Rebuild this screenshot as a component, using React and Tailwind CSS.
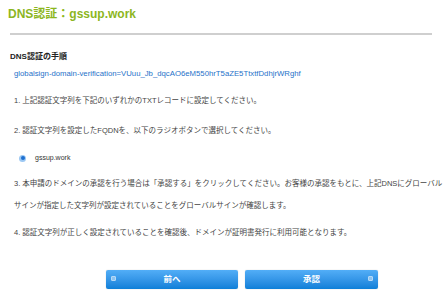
export default function App() {
  const font = { fontFamily: '"Liberation Sans", "Noto Sans CJK JP", sans-serif' };
  return (
    <div className="w-[444px] h-[306px] bg-white overflow-hidden relative" style={font}>
      <div className="pt-[6px] pl-[8px] text-[12px] leading-[16px] font-bold text-[#8cb61e] whitespace-nowrap">
        DNS認証：gssup.work
      </div>
      <div className="mt-[11px] ml-[10px] w-[422px] h-[2px] bg-[#cfcfcf]" />
      <div className="mt-[17px] pl-[10px] text-[8px] leading-[10px] font-bold text-[#222] whitespace-nowrap">
        DNS認証の手順
      </div>
      <div className="mt-[7px] pl-[14px] text-[7.75px] leading-[10px] text-[#1f72c9] whitespace-nowrap">
        globalsign-domain-verification=VUuu_Jb_dqcAO6eM550hrT5aZE5TtxtfDdhjrWRghf
      </div>
      <div className="mt-[17px] pl-[14px] text-[7.5px] leading-[10px] text-[#444] whitespace-nowrap">
        1. 上記認証文字列を下記のいずれかのTXTレコードに設定してください。
      </div>
      <div className="mt-[20px] pl-[14px] text-[7.5px] leading-[10px] text-[#444] whitespace-nowrap">
        2. 認証文字列を設定したFQDNを、以下のラジオボタンで選択してください。
      </div>
      <div className="mt-[17px] pl-[19px] flex items-center gap-[9px] h-[10px]">
        <span className="w-[7px] h-[7px] rounded-full bg-[#9cc8f3] flex items-center justify-center">
          <span className="w-[4px] h-[4px] rounded-full bg-[#1e6fd0]" />
        </span>
        <span className="text-[7px] leading-[10px] text-[#333] whitespace-nowrap">gssup.work</span>
      </div>
      <div className="mt-[16px] pl-[14px] text-[7.5px] leading-[10px] text-[#444] whitespace-nowrap">
        3. 本申請のドメインの承認を行う場合は「承認する」をクリックしてください。お客様の承認をもとに、上記DNSにグローバル
      </div>
      <div className="mt-[12px] pl-[14px] text-[7.5px] leading-[10px] text-[#444] whitespace-nowrap">
        サインが指定した文字列が設定されていることをグローバルサインが確認します。
      </div>
      <div className="mt-[17px] pl-[14px] text-[7.5px] leading-[10px] text-[#444] whitespace-nowrap">
        4. 認証文字列が正しく設定されていることを確認後、ドメインが証明書発行に利用可能となります。
      </div>
      <div className="mt-[32px] pl-[106px] flex gap-[7px]">
        <button className="relative w-[132px] h-[19px] rounded-[2px] bg-gradient-to-b from-[#52aef7] to-[#0c7fd8] text-white text-[8.5px] font-bold flex items-center justify-center shadow-[0_0_1px_rgba(0,0,0,0.3)]">
          <span className="absolute left-[5px] top-[6px] w-[5px] h-[5px] rounded-[1px] bg-[#8ec4f0] border border-[#b5d9f7]" />
          前へ
        </button>
        <button className="relative w-[133px] h-[19px] rounded-[2px] bg-gradient-to-b from-[#52aef7] to-[#0c7fd8] text-white text-[8.5px] font-bold flex items-center justify-center shadow-[0_0_1px_rgba(0,0,0,0.3)]">
          承認
          <span className="absolute right-[5px] top-[6px] w-[5px] h-[5px] rounded-[1px] bg-[#8ec4f0] border border-[#b5d9f7]" />
        </button>
      </div>
    </div>
  );
}
